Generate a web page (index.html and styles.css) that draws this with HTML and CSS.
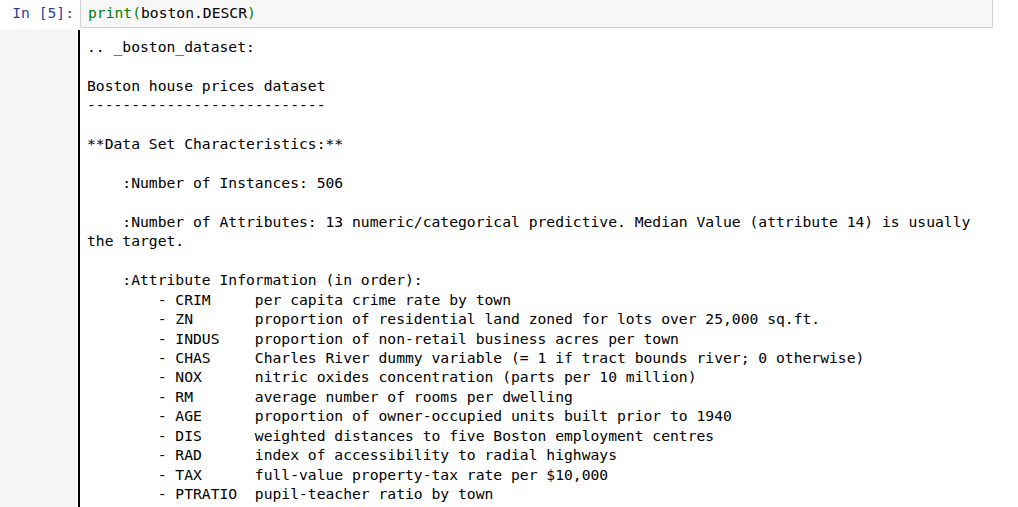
FILE: index.html
```html
<!DOCTYPE html>
<html>
<head>
<meta charset="utf-8">
<link rel="stylesheet" href="styles.css">
</head>
<body>
<div class="cell">
  <div class="input-row">
    <div class="prompt">In&nbsp;[5]:</div>
    <div class="input-area"><span class="builtin">print</span><span class="bracket">(</span>boston.DESCR<span class="bracket">)</span></div>
  </div>
  <div class="output-row">
    <div class="out-prompt"></div>
    <div class="output">
<pre class="output-text">.. _boston_dataset:

Boston house prices dataset
---------------------------

**Data Set Characteristics:**  

    :Number of Instances: 506 

    :Number of Attributes: 13 numeric/categorical predictive. Median Value (attribute 14) is usually the target.

    :Attribute Information (in order):
        - CRIM     per capita crime rate by town
        - ZN       proportion of residential land zoned for lots over 25,000 sq.ft.
        - INDUS    proportion of non-retail business acres per town
        - CHAS     Charles River dummy variable (= 1 if tract bounds river; 0 otherwise)
        - NOX      nitric oxides concentration (parts per 10 million)
        - RM       average number of rooms per dwelling
        - AGE      proportion of owner-occupied units built prior to 1940
        - DIS      weighted distances to five Boston employment centres
        - RAD      index of accessibility to radial highways
        - TAX      full-value property-tax rate per $10,000
        - PTRATIO  pupil-teacher ratio by town</pre>
    </div>
  </div>
</div>
</body>
</html>
```

FILE: styles.css
```css
html, body {
  margin: 0;
  padding: 0;
  background: #ffffff;
  overflow: hidden;
  height: 507px;
}

.cell {
  display: flex;
  flex-direction: column;
  height: 507px;
  font-family: "DejaVu Sans Mono", "Liberation Mono", monospace;
  font-size: 14.68px;
  line-height: 19.43px;
}

.input-row {
  display: flex;
  height: 28px;
  flex: none;
}

.prompt {
  width: 80px;
  box-sizing: border-box;
  padding: 3px 6px 0 0;
  text-align: right;
  color: #303f9f;
  white-space: nowrap;
}

.input-area {
  width: 913px;
  box-sizing: border-box;
  background: #f7f7f7;
  border: 1px solid #cfcfcf;
  border-top: none;
  border-radius: 0 0 2px 2px;
  padding: 3px 0 0 7px;
  color: #000000;
  white-space: pre;
}

.builtin,
.bracket {
  color: #008000;
}

.output-row {
  display: flex;
  margin-top: 2px;
  flex: 1;
  min-height: 0;
}

.out-prompt {
  width: 77px;
  margin-right: 1px;
  background: #f5f5f5;
  flex: none;
}

.output {
  border-left: 2px solid #000000;
  padding: 7px 0 0 7px;
  width: 906px;
  flex: none;
}

.output-text {
  margin: 0;
  font: inherit;
  color: #000000;
  white-space: pre-wrap;
  word-wrap: break-word;
}
```
